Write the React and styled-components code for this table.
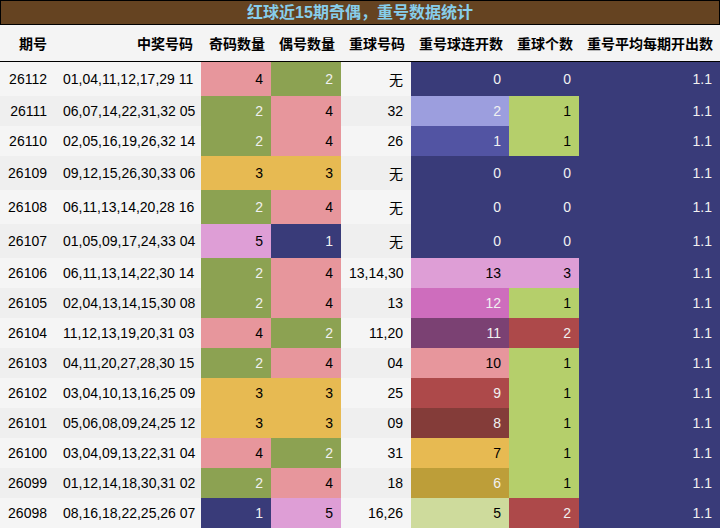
import React from 'react'
import styled, { createGlobalStyle } from 'styled-components'

// matplotlib tab20b palette, as the source styler used
const C = {
  navy: '#393b79',
  blue: '#5254a3',
  lavender: '#9c9ede',
  olive: '#8ca252',
  lime: '#b5cf6b',
  pale: '#cedb9c',
  gold: '#bd9e39',
  yellow: '#e7ba52',
  maroon: '#843c39',
  red: '#ad494a',
  pink: '#e7969c',
  purple: '#7b4173',
  orchid: '#ce6dbd',
  plum: '#de9ed6',
}

const DARK = [C.navy, C.blue, C.lavender, C.olive, C.gold, C.maroon, C.red, C.purple, C.orchid]

const COLUMNS = [
  { label: '期号', width: 55 },
  { label: '中奖号码', width: 146 },
  { label: '奇码数量', width: 70 },
  { label: '偶号数量', width: 70 },
  { label: '重球号码', width: 70 },
  { label: '重号球连开数', width: 98 },
  { label: '重球个数', width: 70 },
  { label: '重号平均每期开出数', width: 141 },
]

const ROWS = [
  ['26112', '01,04,11,12,17,29 11', [4, C.pink], [2, C.olive], '无', [0, C.navy], [0, C.navy]],
  ['26111', '06,07,14,22,31,32 05', [2, C.olive], [4, C.pink], '32', [2, C.lavender], [1, C.lime]],
  ['26110', '02,05,16,19,26,32 14', [2, C.olive], [4, C.pink], '26', [1, C.blue], [1, C.lime]],
  ['26109', '09,12,15,26,30,33 06', [3, C.yellow], [3, C.yellow], '无', [0, C.navy], [0, C.navy]],
  ['26108', '06,11,13,14,20,28 16', [2, C.olive], [4, C.pink], '无', [0, C.navy], [0, C.navy]],
  ['26107', '01,05,09,17,24,33 04', [5, C.plum], [1, C.navy], '无', [0, C.navy], [0, C.navy]],
  ['26106', '06,11,13,14,22,30 14', [2, C.olive], [4, C.pink], '13,14,30', [13, C.plum], [3, C.plum]],
  ['26105', '02,04,13,14,15,30 08', [2, C.olive], [4, C.pink], '13', [12, C.orchid], [1, C.lime]],
  ['26104', '11,12,13,19,20,31 03', [4, C.pink], [2, C.olive], '11,20', [11, C.purple], [2, C.red]],
  ['26103', '04,11,20,27,28,30 15', [2, C.olive], [4, C.pink], '04', [10, C.pink], [1, C.lime]],
  ['26102', '03,04,10,13,16,25 09', [3, C.yellow], [3, C.yellow], '25', [9, C.red], [1, C.lime]],
  ['26101', '05,06,08,09,24,25 12', [3, C.yellow], [3, C.yellow], '09', [8, C.maroon], [1, C.lime]],
  ['26100', '03,04,09,13,22,31 04', [4, C.pink], [2, C.olive], '31', [7, C.yellow], [1, C.lime]],
  ['26099', '01,12,14,18,30,31 02', [2, C.olive], [4, C.pink], '18', [6, C.gold], [1, C.lime]],
  ['26098', '08,16,18,22,25,26 07', [1, C.navy], [5, C.plum], '16,26', [5, C.pale], [2, C.red]],
]

const GlobalStyle = createGlobalStyle`
  body {
    margin: 0;
    background: #ffffff;
    font-family: "Liberation Sans", "Noto Sans CJK SC", sans-serif;
  }
`

const Wrapper = styled.div`
  width: 720px;
`

const Title = styled.div`
  height: 23px;
  border: 1px solid #000;
  background: #654321;
  color: #87ceeb;
  font-size: 16px;
  font-weight: bold;
  line-height: 23px;
  text-align: center;
`

const Table = styled.table`
  width: 720px;
  border-collapse: collapse;
  table-layout: fixed;
  font-size: 14px;
`

const HeadCell = styled.th`
  height: 36px;
  padding: 0 8px;
  background: #f4f4f4;
  border-bottom: 1px solid #000;
  text-align: right;
  font-weight: bold;
  color: #000;
  white-space: nowrap;
`

const Row = styled.tr`
  background: ${props => (props.striped ? '#efefef' : '#f5f5f5')};
`

const Cell = styled.td`
  height: ${props => (props.tall ? 34 : 30)}px;
  padding: 0 8px;
  text-align: right;
  white-space: nowrap;
  color: #000;
`

const ColorCell = styled(Cell)`
  background: ${props => props.bg};
  color: ${props => (DARK.includes(props.bg) ? '#f1f1f1' : '#000')};
`

const App = () => (
  <Wrapper>
    <GlobalStyle />
    <Title>红球近15期奇偶，重号数据统计</Title>
    <Table>
      <colgroup>
        {COLUMNS.map(col => (
          <col key={col.label} style={{ width: col.width }} />
        ))}
      </colgroup>
      <thead>
        <tr>
          {COLUMNS.map(col => (
            <HeadCell key={col.label}>{col.label}</HeadCell>
          ))}
        </tr>
      </thead>
      <tbody>
        {ROWS.map(([issue, numbers, odd, even, repeat, streak, count], index) => {
          const tall = repeat === '无'
          return (
            <Row key={issue} striped={index % 2 === 1}>
              <Cell tall={tall}>{issue}</Cell>
              <Cell tall={tall}>{numbers}</Cell>
              <ColorCell tall={tall} bg={odd[1]}>{odd[0]}</ColorCell>
              <ColorCell tall={tall} bg={even[1]}>{even[0]}</ColorCell>
              <Cell tall={tall}>{repeat}</Cell>
              <ColorCell tall={tall} bg={streak[1]}>{streak[0]}</ColorCell>
              <ColorCell tall={tall} bg={count[1]}>{count[0]}</ColorCell>
              <ColorCell tall={tall} bg={C.navy}>1.1</ColorCell>
            </Row>
          )
        })}
      </tbody>
    </Table>
  </Wrapper>
)

export default App
